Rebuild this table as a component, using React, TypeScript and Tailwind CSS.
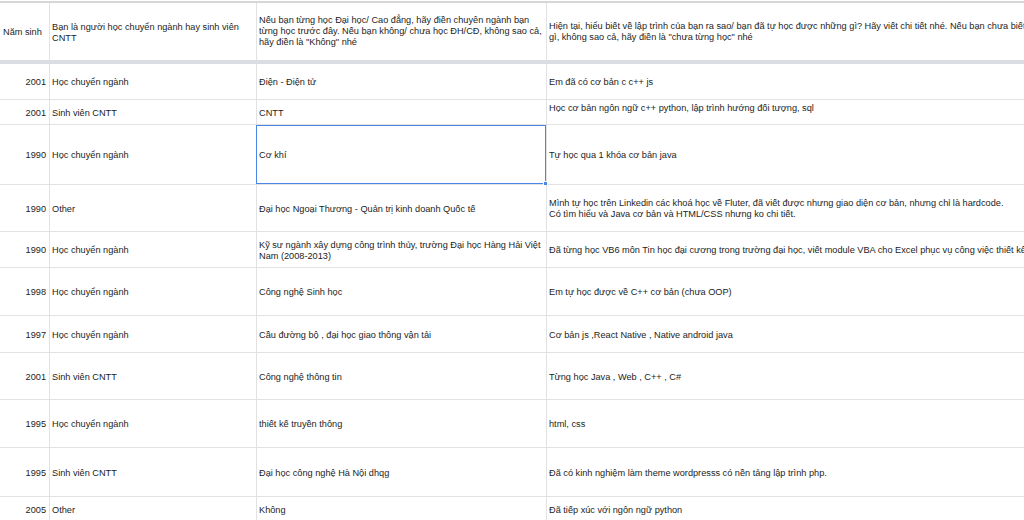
import type { ReactNode } from 'react'

type Row = {
  h: string
  year: string
  kind: string
  major: ReactNode
  skills: ReactNode
  selected?: boolean
  skillsTop?: boolean
}

const rows: Row[] = [
  { h: 'h-[36px]', year: '2001', kind: 'Học chuyển ngành', major: 'Điện - Điện tử', skills: 'Em đã có cơ bản c c++ js' },
  {
    h: 'h-[25px]',
    year: '2001',
    kind: 'Sinh viên CNTT',
    major: 'CNTT',
    skills: 'Học cơ bản ngôn ngữ c++ python, lập trình hướng đối tượng, sql',
    skillsTop: true,
  },
  { h: 'h-[60px]', year: '1990', kind: 'Học chuyển ngành', major: 'Cơ khí', skills: 'Tự học qua 1 khóa cơ bản java', selected: true },
  {
    h: 'h-[47px]',
    year: '1990',
    kind: 'Other',
    major: 'Đại học Ngoại Thương - Quản trị kinh doanh Quốc tế',
    skills: (
      <>
        Mình tự học trên Linkedin các khoá học về Fluter, đã viết được nhưng giao diện cơ bản, nhưng chỉ là hardcode.
        <br />
        Có tìm hiểu và Java cơ bản và HTML/CSS nhưng ko chi tiết.
      </>
    ),
  },
  {
    h: 'h-[36px]',
    year: '1990',
    kind: 'Học chuyển ngành',
    major: (
      <>
        Kỹ sư ngành xây dựng công trình thủy, trường Đại học Hàng Hải Việt
        <br />
        Nam (2008-2013)
      </>
    ),
    skills: 'Đã từng học VB6 môn Tin học đại cương trong trường đại học, viết module VBA cho Excel phục vụ công việc thiết kế',
  },
  { h: 'h-[48px]', year: '1998', kind: 'Học chuyển ngành', major: 'Công nghệ Sinh học', skills: 'Em tự học được về C++ cơ bản (chưa OOP)' },
  { h: 'h-[37px]', year: '1997', kind: 'Học chuyển ngành', major: 'Cầu đường bộ , đại học giao thông vận tải', skills: 'Cơ bản js ,React Native , Native android java' },
  { h: 'h-[47px]', year: '2001', kind: 'Sinh viên CNTT', major: 'Công nghệ thông tin', skills: 'Từng học Java , Web , C++ , C#' },
  { h: 'h-[48px]', year: '1995', kind: 'Học chuyển ngành', major: 'thiết kế truyền thông', skills: 'html, css' },
  { h: 'h-[49px]', year: '1995', kind: 'Sinh viên CNTT', major: 'Đại học công nghệ Hà Nội dhqg', skills: 'Đã có kinh nghiệm làm theme wordpresss có nền tảng lập trình php.' },
  { h: 'h-[25px]', year: '2005', kind: 'Other', major: 'Không', skills: 'Đã tiếp xúc với ngôn ngữ python' },
]

const cols = 'grid grid-cols-[50px_207px_290px_1fr]'
const cell = 'flex items-center border-r border-[#e2e2e2] px-[2px] whitespace-nowrap overflow-visible'

export default function App() {
  return (
    <div className="w-[1024px] h-[520px] overflow-hidden bg-white text-[9.2px] leading-[11px] text-[#1c1c1c] font-['Liberation_Sans',Arial,sans-serif]">
      <div className="h-px" />
      <div className="h-[2px] bg-[#d6d6d6]" />
      <div className={`${cols} h-[57px]`}>
        <div className={`${cell} pl-[3px] pt-[2px]`}>Năm sinh</div>
        <div className={`${cell} pt-[2px]`}>
          <span>
            Bạn là người học chuyển ngành hay sinh viên
            <br />
            CNTT
          </span>
        </div>
        <div className={cell}>
          <span>
            Nếu bạn từng học Đại học/ Cao đẳng, hãy điền chuyên ngành bạn
            <br />
            từng học trước đây. Nếu bạn không/ chưa học ĐH/CĐ, không sao cả,
            <br />
            hãy điền là "Không" nhé
          </span>
        </div>
        <div className={`${cell} border-r-0`}>
          <span>
            Hiện tại, hiểu biết về lập trình của bạn ra sao/ bạn đã tự học được những gì? Hãy viết chi tiết nhé. Nếu bạn chưa biết
            <br />
            gì, không sao cả, hãy điền là "chưa từng học" nhé
          </span>
        </div>
      </div>
      <div className="h-[4px] bg-[#dcdde2]" />
      {rows.map((r, i) => (
        <div key={i} className={`${cols} ${r.h} border-b border-[#e2e2e2]`}>
          <div className={`${cell} justify-end pr-[3px] pt-[2px]`}>{r.year}</div>
          <div className={`${cell} pt-[2px]`}>{r.kind}</div>
          <div className={`${cell} relative pt-[2px]`}>
            <span>{r.major}</span>
            {r.selected && (
              <div className="absolute -left-px top-0 right-0 bottom-0 border border-[#4a86e8]">
                <div className="absolute -right-[3px] -bottom-[3px] w-[5px] h-[5px] bg-[#4a86e8] border border-white" />
              </div>
            )}
          </div>
          <div className={`${cell} border-r-0 ${r.skillsTop ? 'items-start pt-[3px]' : 'pt-[2px]'}`}>
            <span>{r.skills}</span>
          </div>
        </div>
      ))}
    </div>
  )
}
